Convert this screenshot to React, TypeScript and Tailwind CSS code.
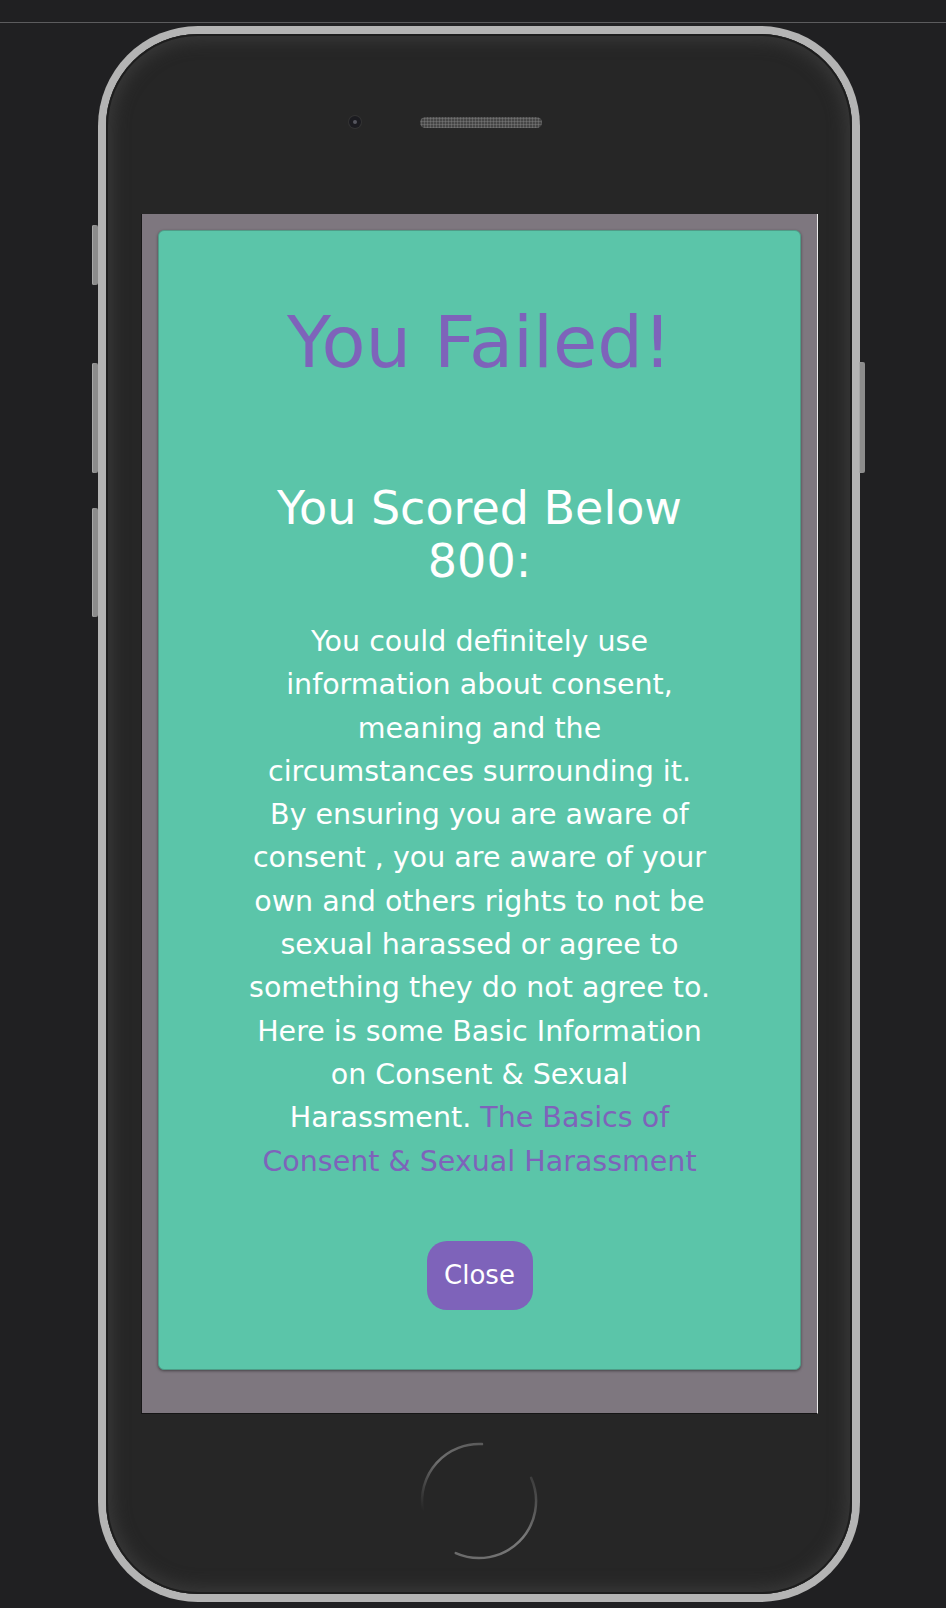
import React from "react"

function SideButton({ className }: { className: string }) {
  return <div className={`absolute w-[6px] rounded-[2px] bg-[#8c8c8c] shadow-[inset_1px_0_0_#a8a8a8] ${className}`} />
}

function HomeButton() {
  return (
    <svg width="120" height="120" viewBox="0 0 120 120" className="block">
      <defs>
        <linearGradient id="arcA" x1="0" y1="1" x2="1" y2="0">
          <stop offset="0" stopColor="#262626" />
          <stop offset="0.5" stopColor="#6f6f6f" />
          <stop offset="1" stopColor="#5a5a5a" />
        </linearGradient>
        <linearGradient id="arcB" x1="1" y1="0" x2="0" y2="1">
          <stop offset="0" stopColor="#3a3a3a" />
          <stop offset="0.45" stopColor="#7a7a7a" />
          <stop offset="1" stopColor="#6a6a6a" />
        </linearGradient>
      </defs>
      <path d="M 3.7 68.9 A 57 57 0 0 1 63 3.1" fill="none" stroke="url(#arcA)" strokeWidth="2.5" strokeLinecap="round" />
      <path d="M 112.1 36.8 A 57 57 0 0 1 36.8 112.1" fill="none" stroke="url(#arcB)" strokeWidth="2.5" strokeLinecap="round" />
    </svg>
  )
}

export default function App() {
  return (
    <div className="min-h-[1608px] w-full bg-[#202022] font-['DejaVu_Sans',sans-serif]">
      {/* browser chrome strip */}
      <div className="h-[22px]" />
      <div className="h-px bg-[#5c5c5e]" />

      {/* phone */}
      <div className="relative ml-[98px] mt-[3px] w-[762px]">
        <SideButton className="-left-[6px] top-[199px] h-[60px]" />
        <SideButton className="-left-[6px] top-[337px] h-[110px]" />
        <SideButton className="-left-[6px] top-[482px] h-[109px]" />
        <SideButton className="-right-[5px] top-[336px] h-[111px]" />

        <div className="rounded-[100px] bg-[#b4b4b4] p-[8px]">
          <div className="flex flex-col rounded-[92px] bg-[#262626] shadow-[inset_0_0_0_2px_#1e1e1e,inset_0_0_16px_7px_#383838]">
            {/* earpiece */}
            <div className="flex h-[180px] items-center pl-[243px] pb-[4px]">
              <div className="flex h-[12px] w-[12px] items-center justify-center rounded-full bg-[#1b1b20] shadow-[0_0_0_1px_#333]">
                <div className="h-[4px] w-[4px] rounded-full bg-[#55565e]" />
              </div>
              <div className="ml-[59px] h-[11px] w-[122px] rounded-full bg-[#464646] bg-[radial-gradient(circle,#707070_0.8px,transparent_1.3px)] bg-[length:3px_3px]" />
            </div>

            {/* screen */}
            <div className="ml-[35px] w-[677px] h-[1200px] border-l border-r border-b border-l-[#171717] border-r-[#ececec] border-b-[#151515] bg-[#7e777f] px-[16px] pt-[16px] pb-[43px] flex flex-col">
              <div className="flex flex-1 flex-col items-center rounded-[6px] border border-[#4f9c87] bg-[#5bc5a9] pt-[70px] text-center shadow-[0_1px_3px_rgba(0,0,0,0.45)]">
                <h1 className="text-[72px] leading-[82px] text-[#7e63ba]">You Failed!</h1>
                <div className="mt-[99px] w-[540px]">
                  <h2 className="text-[46px] leading-[53px] text-white">
                    You Scored Below
                    <br />
                    800:
                  </h2>
                  <p className="mt-[32px] text-[28.5px] leading-[43.3px] text-white">
                    You could definitely use
                    <br />
                    information about consent,
                    <br />
                    meaning and the
                    <br />
                    circumstances surrounding it.
                    <br />
                    By ensuring you are aware of
                    <br />
                    consent , you are aware of your
                    <br />
                    own and others rights to not be
                    <br />
                    sexual harassed or agree to
                    <br />
                    something they do not agree to.
                    <br />
                    Here is some Basic Information
                    <br />
                    on Consent &amp; Sexual
                    <br />
                    Harassment.{" "}
                    <a href="#" className="text-[#7e63ba]">
                      The Basics of
                      <br />
                      Consent &amp; Sexual Harassment
                    </a>
                  </p>
                </div>
                <button className="mt-[58px] flex h-[69px] w-[106px] items-center justify-center rounded-[20px] bg-[#7e63ba] text-[26px] text-white">
                  Close
                </button>
              </div>
            </div>

            {/* home button */}
            <div className="flex h-[180px] items-start justify-center pt-[27px]">
              <HomeButton />
            </div>
          </div>
        </div>
      </div>
    </div>
  )
}
